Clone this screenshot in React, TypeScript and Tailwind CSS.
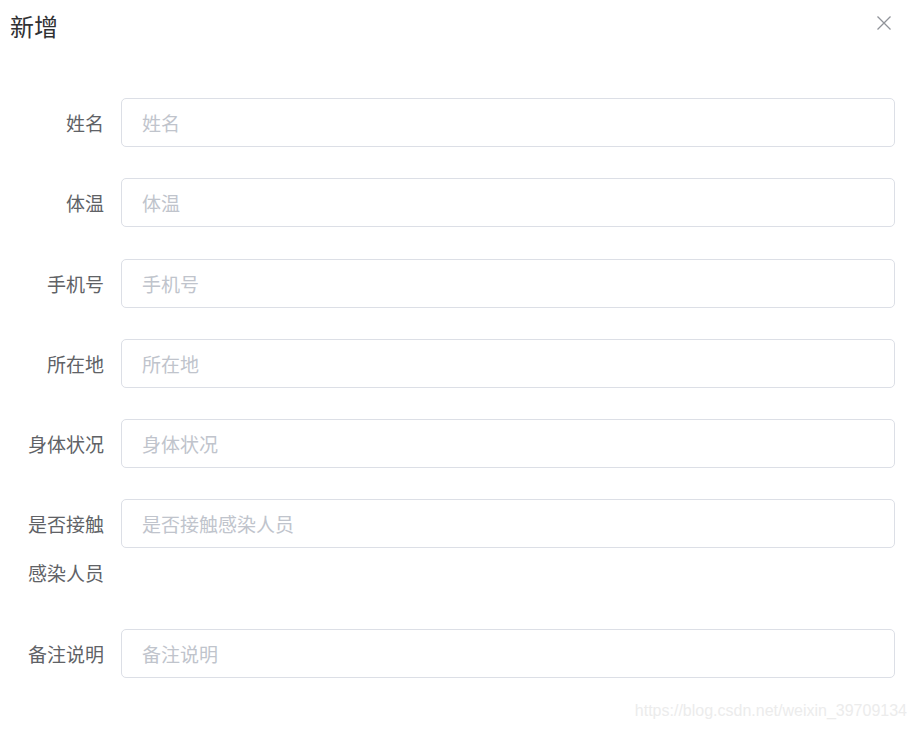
import React from 'react';

const fields = [
  { label: '姓名', placeholder: '姓名' },
  { label: '体温', placeholder: '体温' },
  { label: '手机号', placeholder: '手机号' },
  { label: '所在地', placeholder: '所在地' },
  { label: '身体状况', placeholder: '身体状况' },
  { label: '是否接触感染人员', placeholder: '是否接触感染人员' },
  { label: '备注说明', placeholder: '备注说明' },
];

export default function App() {
  return (
    <div
      className="relative w-[917px] h-[730px] bg-white overflow-hidden"
      style={{ fontFamily: '"Microsoft YaHei", "Noto Sans CJK SC", "Liberation Sans", sans-serif' }}
    >
      {/* header */}
      <div className="flex items-start justify-between pl-[10px] pr-[24px] pt-[10px] h-[54px]">
        <span className="text-[24px] leading-[32px] text-[#303133]">新增</span>
        <button className="text-[#909399] w-[18px] h-[18px] mt-[4px] flex items-center justify-center">
          <svg width="16" height="16" viewBox="0 0 16 16" fill="none" stroke="currentColor" strokeWidth="1.3">
            <path d="M1.5 1.5 L14.5 14.5 M14.5 1.5 L1.5 14.5" />
          </svg>
        </button>
      </div>

      {/* form */}
      <form className="pl-[16px] pr-[22px] pt-[44px]">
        {fields.map((f) => (
          <div key={f.label} className="flex items-start mb-[31.3px]">
            <label className="w-[105px] shrink-0 pr-[17px] text-right text-[19px] leading-[49px] text-[#606266] break-all">
              {f.label}
            </label>
            <input
              placeholder={f.placeholder}
              className="flex-1 h-[49px] border border-[#dcdfe6] rounded-[5px] px-[20px] text-[19px] text-[#606266] placeholder:text-[#c0c4cc] outline-none"
            />
          </div>
        ))}
      </form>

      {/* watermark */}
      <div
        className="absolute right-[10px] bottom-[9px] text-[16px] leading-[20px] text-[#ececec]"
        style={{ fontFamily: '"Liberation Sans", Arial, sans-serif' }}
      >
        https://blog.csdn.net/weixin_39709134
      </div>
    </div>
  );
}
